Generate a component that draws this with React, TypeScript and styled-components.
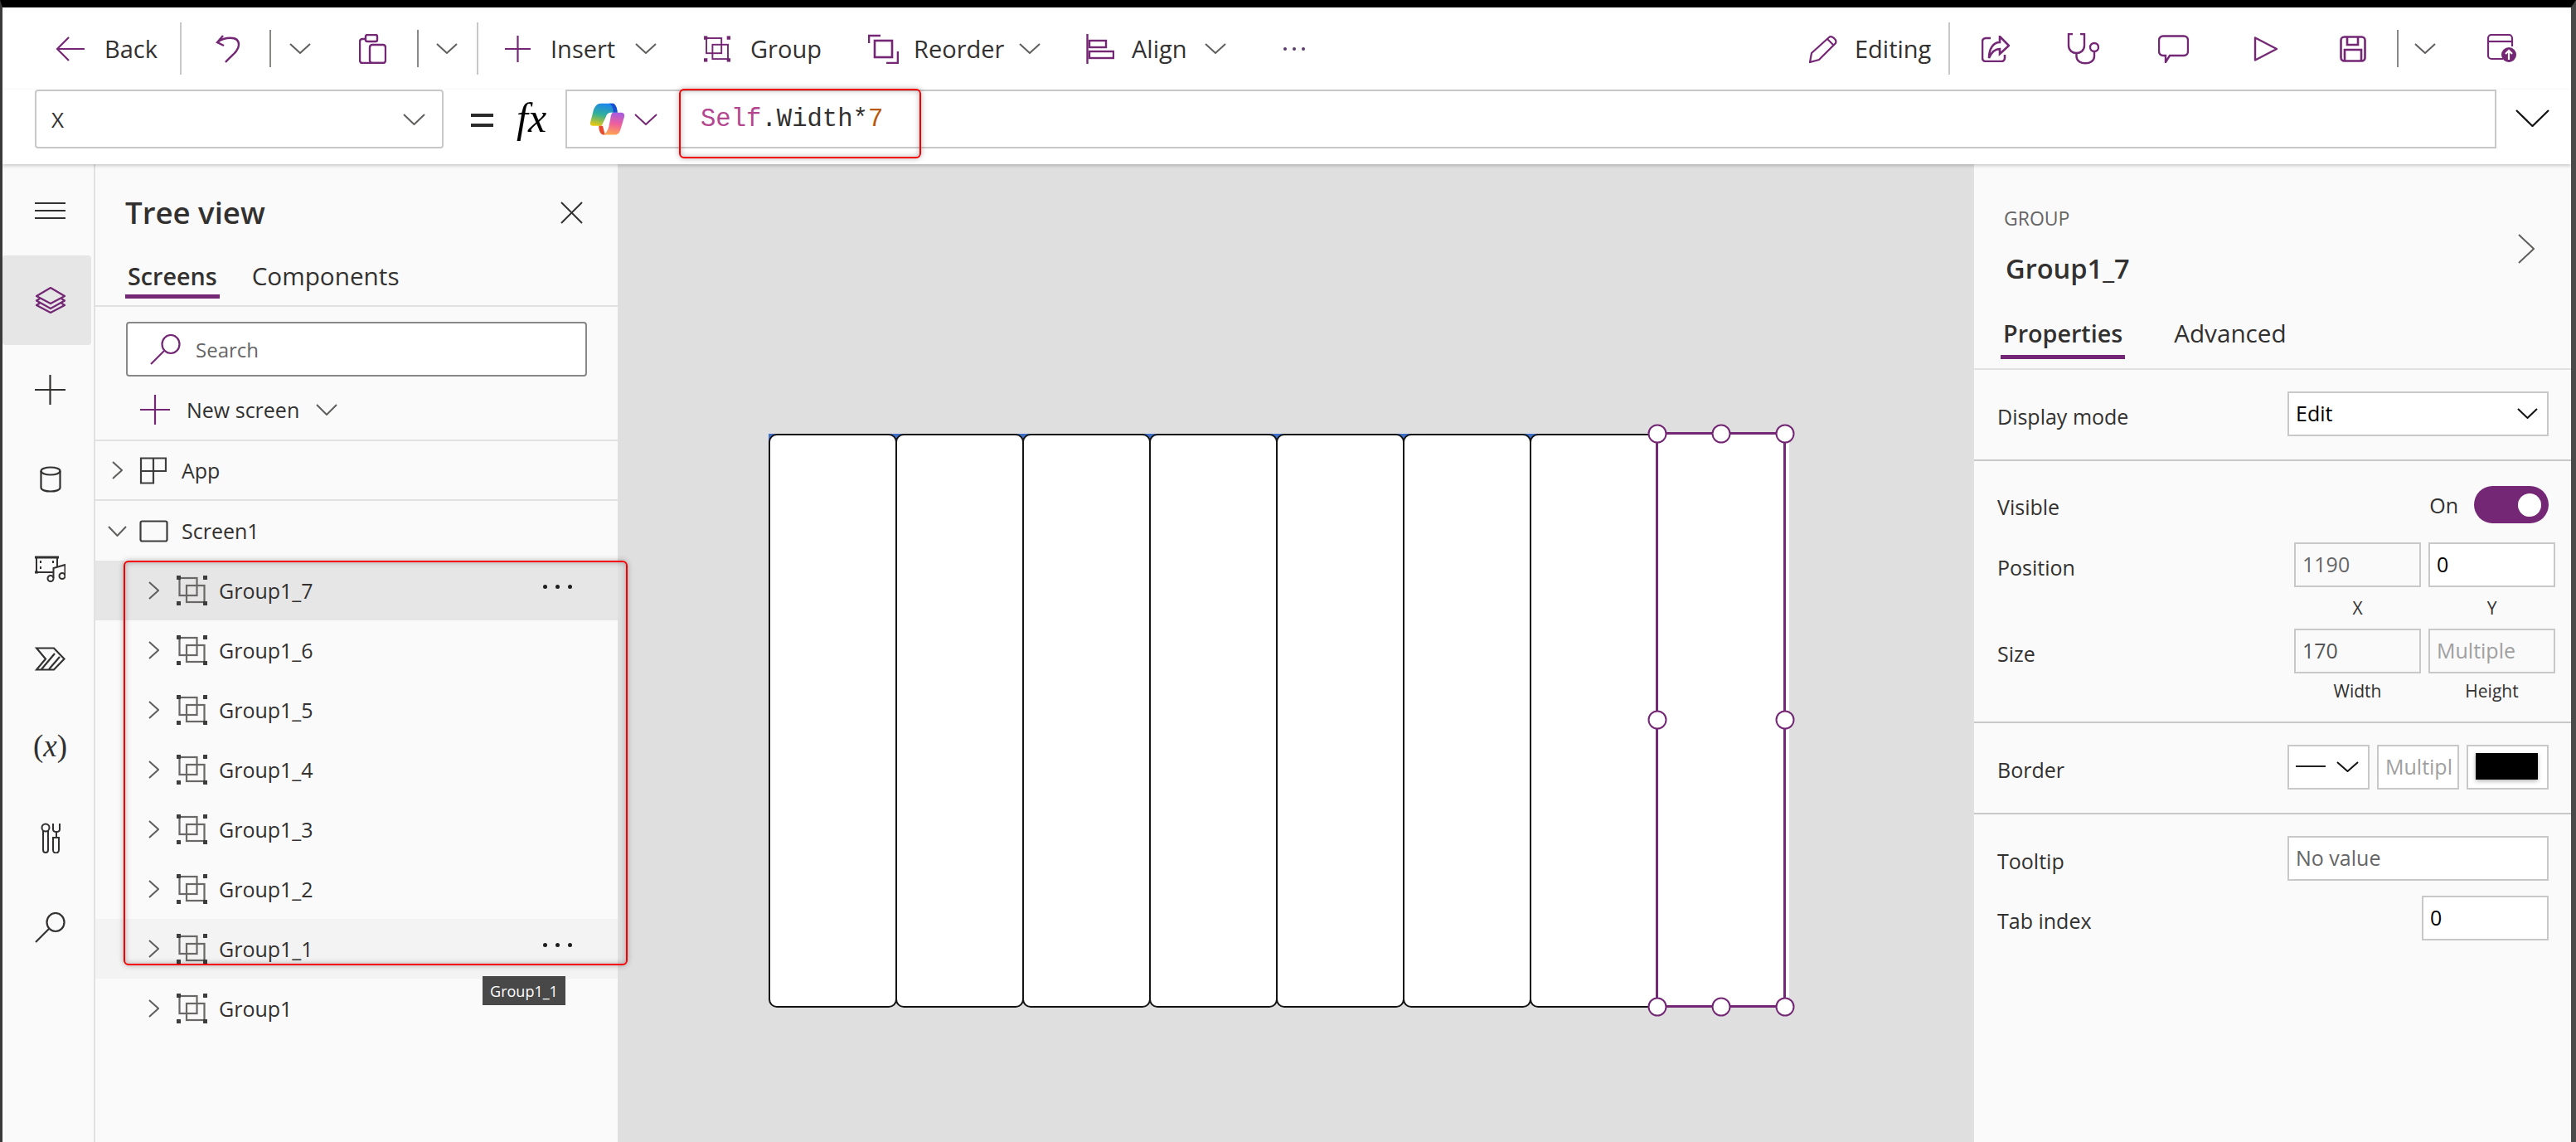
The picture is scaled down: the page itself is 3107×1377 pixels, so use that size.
import React from "react"
import styled, { createGlobalStyle } from "styled-components"

const PURPLE = "#742774"
const INK = "#323130"
const LINE = "#c8c8c8"

const GlobalStyle = createGlobalStyle`
  html, body { margin: 0; padding: 0; background: #fff; }
  body { font-family: "Open Sans", "Noto Sans", sans-serif; color: ${INK}; }
  * { box-sizing: border-box; }
`

const Frame = styled.div`
  width: 3107px;
  height: 1377px;
  overflow: hidden;
  display: flex;
  flex-direction: column;
  position: relative;
  border-top: 9px solid #000;
  border-left: 3px solid #3a3a3a;
  border-right: 6px solid #4a4a4a;
`

/* ---- svg helper ---- */
const Svg = styled.svg<{ $c?: string; $sw?: number }>`
  display: block;
  flex-shrink: 0;
  fill: none;
  stroke: ${p => p.$c || PURPLE};
  stroke-width: ${p => p.$sw || 2.4};
`

type IconProps = { w: number; h: number; c?: string; sw?: number; children?: React.ReactNode }
const Ico = ({ w, h, c, sw, children }: IconProps) => (
  <Svg width={w} height={h} viewBox={`0 0 ${w} ${h}`} $c={c} $sw={sw}>{children}</Svg>
)

const Down = ({ w = 26, h = 13, c = "#605e5c", sw = 2 }: Partial<IconProps>) => (
  <Ico w={w} h={h} c={c} sw={sw}><path d={`M1 1L${w / 2} ${h - 1}L${w - 1} 1`} /></Ico>
)
const Right = ({ w = 13, h = 22, c = "#605e5c", sw = 2 }: Partial<IconProps>) => (
  <Ico w={w} h={h} c={c} sw={sw}><path d={`M1 1L${w - 1} ${h / 2}L1 ${h - 1}`} /></Ico>
)

const GroupGlyph = ({ c = "#6a6866", dot = "#3d3d3d", w = 37, h = 36 }: { c?: string; dot?: string; w?: number; h?: number }) => (
  <Svg width={w} height={h} viewBox="0 0 37 36" $c={c} $sw={2.2}>
    <rect x="3.5" y="3" width="21" height="21" />
    <rect x="12" y="12" width="21.5" height="20" />
    <g fill={dot} stroke="none">
      <rect x="0" y="0" width="5" height="5" />
      <rect x="32" y="0" width="5" height="5" />
      <rect x="0" y="31" width="5" height="5" />
      <rect x="32" y="31" width="5" height="5" />
    </g>
  </Svg>
)

const SearchGlyph = ({ c = PURPLE }: { c?: string }) => (
  <Ico w={37} h={37} c={c} sw={2.2}>
    <ellipse cx="25" cy="12" rx="10.5" ry="11" />
    <path d="M17 20L1 36" />
  </Ico>
)

const PlusGlyph = ({ w = 36, h = 36, c = PURPLE }: { w?: number; h?: number; c?: string }) => (
  <Ico w={w} h={h} c={c} sw={2.2}>
    <path d={`M${w / 2} 0V${h}M0 ${h / 2}H${w}`} />
  </Ico>
)

const Copilot = () => (
  <svg width="41" height="39" viewBox="67 50 123 116" style={{ flexShrink: 0 }}>
    <defs>
      <linearGradient id="cpA" x1="0.55" y1="0" x2="0.3" y2="1">
        <stop offset="0" stopColor="#1b86ee" />
        <stop offset="0.5" stopColor="#2fb09a" />
        <stop offset="1" stopColor="#e6c80f" />
      </linearGradient>
      <linearGradient id="cpB" x1="0.6" y1="0" x2="0.45" y2="1">
        <stop offset="0" stopColor="#a85ce0" />
        <stop offset="0.5" stopColor="#ee5f9c" />
        <stop offset="1" stopColor="#ffa552" />
      </linearGradient>
    </defs>
    <path d="M105 52H148C158 52 165 70 165 85H142C130 85 126 92 122 104L112 128C110 132 106 133 100 133H78C70 133 65 128 67 120L76 86C80 66 90 52 105 52Z" fill="url(#cpA)" />
    <path d="M135 52H148C158 52 165 70 165 85H150C150 70 146 56 135 52Z" fill="#1a4fd0" />
    <path d="M98 133H112L120 165H114C104 165 97 150 98 133Z" fill="#e9492c" />
    <path d="M150 85H180C188 85 192 92 190 100L178 140C174 156 168 165 156 165H114C124 160 130 150 134 136L140 105C142 94 144 85 150 85Z" fill="url(#cpB)" />
    <path d="M122 104L138 98L128 128L108 132Z" fill="#fff" />
  </svg>
)

/* ---- toolbar ---- */
const Toolbar = styled.div`
  height: 99px;
  flex-shrink: 0;
  background: #fff;
  display: flex;
  align-items: center;
`
const Tool = styled.div<{ $w: number; $pad?: number; $gap?: number }>`
  width: ${p => p.$w}px;
  height: 100%;
  flex-shrink: 0;
  display: flex;
  align-items: center;
  padding-left: ${p => p.$pad || 0}px;
  gap: ${p => p.$gap || 0}px;
  font-size: 29px;
  color: ${INK};
  white-space: nowrap;
`
const Lead = styled.div`
  width: 64px;
  flex-shrink: 0;
`
const Spring = styled.div`
  flex: 1;
`
const Sep = styled.div<{ $dark?: boolean }>`
  width: 2px;
  flex-shrink: 0;
  height: ${p => (p.$dark ? 45 : 63)}px;
  background: ${p => (p.$dark ? "#8a8886" : LINE)};
`
const Dots = styled.div<{ $gap: number; $size: number; $c: string }>`
  display: flex;
  gap: ${p => p.$gap}px;
  & > i {
    display: block;
    width: ${p => p.$size}px;
    height: ${p => p.$size}px;
    border-radius: 50%;
    background: ${p => p.$c};
  }
`

/* ---- formula bar ---- */
const FormulaBar = styled.div`
  height: 90px;
  flex-shrink: 0;
  background: #fff;
  display: flex;
  align-items: flex-start;
  position: relative;
  z-index: 2;
  box-shadow: 0 2px 4px rgba(0, 0, 0, 0.2);
`
const PropPicker = styled.div`
  width: 493px;
  height: 71px;
  margin-left: 39px;
  border: 2px solid ${LINE};
  border-radius: 4px;
  display: flex;
  align-items: center;
  justify-content: space-between;
  padding: 0 20px 0 18px;
  font-size: 26px;
`
const Eq = styled.div`
  width: 53px;
  margin-left: 33px;
  height: 71px;
  display: flex;
  align-items: center;
  & > i {
    display: block;
    width: 27px;
    height: 16px;
    border-top: 4px solid #2a2a2a;
    border-bottom: 4px solid #2a2a2a;
    margin-top: 2px;
  }
`
const Fx = styled.div`
  width: 61px;
  height: 71px;
  padding-left: 2px;
  font: italic 50px/68px "Liberation Serif", serif;
  color: #000;
`
const Expression = styled.div`
  width: 2329px;
  flex: none;
  height: 71px;
  border: 2px solid ${LINE};
  display: flex;
  align-items: center;
  gap: 12px;
  padding-left: 28px;
`
const Code = styled.div`
  margin-left: 40px;
  font: 30.6px "Liberation Mono", monospace;
  color: #323130;
  white-space: pre;
`
const Tok = styled.span<{ $c: string }>`
  color: ${p => p.$c};
`
const BigChevron = styled.div`
  margin-left: 23px;
  padding-top: 24px;
`
const RedMark = styled.div`
  position: absolute;
  border: 2px solid #f40000;
  border-radius: 6px;
  box-shadow: 0 0 7px rgba(0, 0, 0, 0.28), inset 0 0 7px rgba(0, 0, 0, 0.28);
  pointer-events: none;
`
const FormulaMark = styled(RedMark)`
  left: 816px;
  top: -1px;
  width: 292px;
  height: 84px;
`

/* ---- main ---- */
const Main = styled.div`
  flex: 1;
  display: flex;
  position: relative;
  min-height: 0;
`
const Rail = styled.div`
  width: 112px;
  flex-shrink: 0;
  background: #fafafa;
  border-right: 2px solid #e1e1e1;
  padding-top: 2px;
`
const RailBtn = styled.div<{ $on?: boolean }>`
  width: 107px;
  height: 108px;
  display: flex;
  align-items: center;
  justify-content: center;
  padding-left: 8px;
  border-radius: 4px;
  background: ${p => (p.$on ? "#e6e6e6" : "transparent")};
`
const VarGlyph = styled(RailBtn)`
  padding-bottom: 5px;
  font: 37px "Liberation Serif", serif;
  color: ${INK};
`

const Tree = styled.div`
  width: 630px;
  flex-shrink: 0;
  background: #fafafa;
`
const TreeHead = styled.div`
  height: 116px;
  display: flex;
  align-items: center;
  justify-content: space-between;
  padding: 0 42px 0 36px;
  font-size: 36.6px;
  font-weight: 600;
  color: ${INK};
`
const TabRow = styled.div<{ $h: number; $pl: number; $gap: number }>`
  height: ${p => p.$h}px;
  display: flex;
  align-items: flex-start;
  gap: ${p => p.$gap}px;
  padding-left: ${p => p.$pl}px;
  border-bottom: 2px solid #e1e1e1;
`
const Tab = styled.div<{ $on?: boolean; $h: number; $pt?: number; $pb?: number }>`
  height: ${p => p.$h}px;
  display: flex;
  align-items: center;
  padding: ${p => p.$pt || 0}px 3px ${p => p.$pb || 0}px;
  font-size: ${p => (p.$on ? 28.7 : 29.7)}px;
  font-weight: ${p => (p.$on ? 600 : 400)};
  color: ${INK};
  border-bottom: 5px solid ${p => (p.$on ? PURPLE : "transparent")};
`
const SearchBox = styled.div`
  width: 556px;
  height: 66px;
  margin: 18px 0 0 37px;
  border: 2px solid #8a8886;
  border-radius: 4px;
  background: #fff;
  display: flex;
  align-items: center;
  gap: 18px;
  padding-left: 27px;
  font-size: 24px;
  color: #666;
`
const NewScreen = styled.div`
  height: 78px;
  display: flex;
  align-items: center;
  padding: 4px 0 0 54px;
  gap: 20px;
  border-bottom: 2px solid #e1e1e1;
  font-size: 25px;
  color: ${INK};
`
const TreeRow = styled.div<{ $indent: number; $bg?: string; $h?: number; $rule?: boolean }>`
  height: ${p => p.$h || 72}px;
  display: flex;
  align-items: center;
  padding-left: ${p => p.$indent}px;
  padding-right: 55px;
  background: ${p => p.$bg || "transparent"};
  border-bottom: ${p => (p.$rule ? "2px solid #e1e1e1" : "none")};
  font-size: 25px;
  color: ${INK};
`
const Caret = styled.div<{ $w?: number }>`
  width: ${p => p.$w || 43}px;
  flex-shrink: 0;
  display: flex;
  justify-content: center;
  padding-right: 13px;
`
const RowIcon = styled.div`
  width: 51px;
  flex-shrink: 0;
`
const RowDots = styled.div`
  margin-left: auto;
  padding-bottom: 10px;
`
const Tip = styled.div`
  position: absolute;
  left: 579px;
  top: 979px;
  width: 100px;
  height: 35px;
  background: #484848;
  color: #fff;
  font-size: 18px;
  display: flex;
  align-items: center;
  justify-content: center;
  z-index: 3;
`
const TreeMark = styled(RedMark)`
  left: 146px;
  top: 478px;
  width: 608px;
  height: 488px;
  z-index: 4;
`

/* ---- canvas ---- */
const Canvas = styled.div`
  width: 1634px;
  flex-shrink: 0;
  background: #dfdfdf;
  padding: 325px 0 0 182px;
`
const Board = styled.div`
  display: flex;
  height: 692px;
  width: fit-content;
  background: linear-gradient(#3f6fc6 0 9px, transparent 9px);
`
const Cell = styled.div`
  width: 155px;
  height: 100%;
  margin-right: -2px;
  background: #fff;
  border: 2px solid #141414;
  border-radius: 10px;
`
const SelectedCell = styled.div`
  width: 157px;
  height: 694px;
  margin: -2px 0 0 -1px;
  position: relative;
  background: #fff;
  border: 3px solid ${PURPLE};
  box-shadow: 4px 0 0 #fff;
`
const Handle = styled.div<{ $x: number; $y: number }>`
  position: absolute;
  left: calc(-1.5px + (100% + 3px) * ${p => p.$x / 100});
  top: calc(-1.5px + (100% + 3px) * ${p => p.$y / 100});
  width: 23px;
  height: 23px;
  transform: translate(-50%, -50%);
  border: 2px solid ${PURPLE};
  border-radius: 50%;
  background: #fff;
`

/* ---- properties panel ---- */
const Panel = styled.div`
  width: 722px;
  flex-shrink: 0;
  background: #fafafa;
  border-left: 2px solid #e1e1e1;
`
const PanelHead = styled.div`
  height: 168px;
  display: flex;
  justify-content: space-between;
  padding: 50px 44px 0 36px;
`
const KindLabel = styled.div`
  font-size: 23px;
  line-height: 30px;
  color: #666;
`
const PanelTitle = styled.div`
  margin: 24px 0 0 2px;
  font-size: 32.6px;
  line-height: 44px;
  font-weight: 600;
  color: ${INK};
`
const HeadCaret = styled.div`
  margin-top: 34px;
`
const Section = styled.div<{ $h: number; $pt?: number }>`
  height: ${p => p.$h}px;
  padding: ${p => p.$pt || 0}px 27px 0 28px;
  border-bottom: 2px solid ${LINE};
`
const LastSection = styled.div`
  padding: 26px 27px 0 28px;
`
const Row = styled.div<{ $mt?: number }>`
  display: flex;
  justify-content: space-between;
  align-items: flex-start;
  margin-top: ${p => p.$mt || 0}px;
`
const Label = styled.div<{ $h?: number }>`
  height: ${p => p.$h || 54}px;
  display: flex;
  align-items: center;
  padding-top: 5px;
  font-size: 25px;
  color: ${INK};
`
const Field = styled.div<{ $w: number; $bg?: string; $c?: string; $h?: number }>`
  width: ${p => p.$w}px;
  height: ${p => p.$h || 54}px;
  flex-shrink: 0;
  border: 2px solid ${LINE};
  background: ${p => p.$bg || "#fff"};
  color: ${p => p.$c || "#000"};
  display: flex;
  align-items: center;
  justify-content: space-between;
  padding: 0 11px 2px 8px;
  font-size: 25px;
  overflow: hidden;
  white-space: nowrap;
`
const Pair = styled.div`
  display: grid;
  grid-template-columns: 153px 153px;
  column-gap: 9px;
  margin-right: -8px;
`
const SubLabel = styled.div<{ $h: number }>`
  height: ${p => p.$h}px;
  display: flex;
  align-items: center;
  justify-content: center;
  font-size: 21px;
  color: ${INK};
`
const OnOff = styled.div`
  display: flex;
  align-items: center;
  gap: 19px;
  font-size: 25px;
`
const Toggle = styled.div`
  width: 90px;
  height: 45px;
  border-radius: 23px;
  background: ${PURPLE};
  display: flex;
  align-items: center;
  justify-content: flex-end;
  padding-right: 9px;
  & > i {
    display: block;
    width: 28px;
    height: 28px;
    border-radius: 50%;
    background: #fff;
  }
`
const Trio = styled.div`
  display: flex;
  gap: 9px;
`
const Dash = styled.div`
  width: 36px;
  height: 2px;
  background: #222;
`
const Clip = styled.div`
  width: 81px;
  flex-shrink: 0;
  overflow: hidden;
`
const Swatch = styled.div`
  width: 77px;
  height: 32px;
  margin-left: 1px;
  background: #000;
  box-shadow: 0 2px 5px rgba(0, 0, 0, 0.3);
`

const groups = ["Group1_7", "Group1_6", "Group1_5", "Group1_4", "Group1_3", "Group1_2", "Group1_1", "Group1"]
const rowBg: Record<string, string> = { Group1_7: "#e6e6e6", Group1_1: "#f3f3f3" }
const handles = [[0, 0], [50, 0], [100, 0], [0, 50], [100, 50], [0, 100], [50, 100], [100, 100]]

const threeDots = (c: string, gap: number, size: number) => (
  <Dots $gap={gap} $size={size} $c={c}><i /><i /><i /></Dots>
)

export default function App() {
  return (
    <Frame>
      <GlobalStyle />
      <Toolbar>
        <Lead />
        <Tool $w={150} $gap={24}>
          <Ico w={35} h={30} sw={2.2}><path d="M35 15H2M16 1L2 15L16 29" /></Ico>
          Back
        </Tool>
        <Sep />
        <Tool $w={106} $pad={41}>
          <Ico w={30} h={34} sw={2.4}><path d="M9 1L2 9L10 13M2 9C10 3 28 0 28 12C28 20 18 26 12 33" /></Ico>
        </Tool>
        <Sep $dark />
        <Tool $w={106} $pad={22}><Down /></Tool>
        <Tool $w={70}>
          <Ico w={33} h={36} sw={2.4}>
            <path d="M8 6H4a3 3 0 0 0-3 3v23a3 3 0 0 0 3 3h25" />
            <rect x="13" y="13" width="19" height="22" rx="3" />
            <rect x="8" y="1" width="14" height="8" rx="2" />
          </Ico>
        </Tool>
        <Sep $dark />
        <Tool $w={70} $pad={21}><Down /></Tool>
        <Sep />
        <Tool $w={272} $pad={32} $gap={24}>
          <PlusGlyph w={31} h={32} />
          Insert
          <Down />
        </Tool>
        <Tool $w={198} $gap={24}>
          <GroupGlyph c={PURPLE} dot={PURPLE} w={32} h={32} />
          Group
        </Tool>
        <Tool $w={263} $gap={18}>
          <Ico w={37} h={36} sw={2.6}>
            <path d="M1 11V2H15" />
            <rect x="8" y="8" width="21" height="20" />
            <path d="M36 21V35H22" />
          </Ico>
          Reorder
          <Down />
        </Tool>
        <Tool $w={238} $gap={21}>
          <Ico w={34} h={36} sw={2.4}>
            <path d="M1.5 0V36" />
            <rect x="4" y="8" width="20" height="8" />
            <rect x="4" y="21" width="29" height="8" />
          </Ico>
          Align
          <Down />
        </Tool>
        <Tool $w={60}>{threeDots("#5a3a6a", 7, 4)}</Tool>
        <Spring />
        <Tool $w={168} $gap={20}>
          <Ico w={35} h={34} sw={2.2}>
            <path d="M1 33L3 22L24 3C27 0 34 6 32 10L12 30Z" />
            <path d="M22 5L30 13" />
          </Ico>
          Editing
        </Tool>
        <Sep />
        <Tool $w={141} $pad={38}>
          <Ico w={34} h={32} sw={2.6}>
            <path d="M11 3H5a4 4 0 0 0-4 4v20a4 4 0 0 0 4 4h19a4 4 0 0 0 4-4v-4" />
            <path d="M22 1L33 12L22 22V16C16 16 12 20 9 27C9 16 14 8 22 8Z" />
          </Ico>
        </Tool>
        <Tool $w={110}>
          <Ico w={39} h={38} sw={2.4}>
            <path d="M7 1H2V15C2 27 21 27 21 15V1H16" />
            <path d="M11.5 24V28C11.5 39 33 39 33 28V22" />
            <circle cx="33" cy="17" r="5" />
          </Ico>
        </Tool>
        <Tool $w={115}>
          <Ico w={37} h={34} sw={2.4}>
            <path d="M6 1.5H31a5 5 0 0 1 5 5V20a5 5 0 0 1-5 5H14L9 33V25H6a5 5 0 0 1-5-5V6.5a5 5 0 0 1 5-5Z" />
          </Ico>
        </Tool>
        <Tool $w={104}>
          <Ico w={30} h={32} sw={2.4}><path d="M2 2.5L28 16L2 29.5Z" strokeLinejoin="round" /></Ico>
        </Tool>
        <Tool $w={69}>
          <Ico w={32} h={32} sw={2.6}>
            <rect x="1.5" y="1.5" width="29" height="29" rx="4" />
            <path d="M9 2V11H22V2M6 30V17H26V30" />
          </Ico>
        </Tool>
        <Sep $dark />
        <Tool $w={106} $pad={19}><Down /></Tool>
        <Tool $w={102}>
          <Svg width={36} height={35} viewBox="0 0 36 35" $c={PURPLE} $sw={2.2}>
            <path d="M20 30H6a4 4 0 0 1-4-4V5a4 4 0 0 1 4-4H27a4 4 0 0 1 4 4v10" />
            <path d="M2 9H31" />
            <circle cx="27" cy="25" r="9" fill={PURPLE} stroke="none" />
            <path d="M27 31V20M23 24L27 20L31 24" stroke="#fff" />
          </Svg>
        </Tool>
      </Toolbar>

      <FormulaBar>
        <PropPicker>X<Down w={27} h={14} /></PropPicker>
        <Eq><i /></Eq>
        <Fx>fx</Fx>
        <Expression>
          <Copilot />
          <Down w={28} h={14} c={PURPLE} />
          <Code>
            <Tok $c="#b4468f">Self</Tok>.Width*<Tok $c="#b8590d">7</Tok>
          </Code>
        </Expression>
        <BigChevron><Down w={41} h={21} c="#111" sw={2.2} /></BigChevron>
        <FormulaMark />
      </FormulaBar>

      <Main>
        <Rail>
          <RailBtn>
            <Ico w={37} h={22} c={INK} sw={2}><path d="M0 2H37M0 11H37M0 20H37" /></Ico>
          </RailBtn>
          <RailBtn $on>
            <Ico w={36} h={32} sw={2.2}>
              <path d="M18 1L35 11L18 20L1 11Z" />
              <path d="M5 14L1 16.5L18 26L35 16.5L31 14" />
              <path d="M5 19.5L1 22L18 31L35 22L31 19.5" />
            </Ico>
          </RailBtn>
          <RailBtn><PlusGlyph w={37} h={36} c={INK} /></RailBtn>
          <RailBtn>
            <Ico w={26} h={32} c={INK} sw={2.2}>
              <path d="M1.5 6V26C1.5 32 24.5 32 24.5 26V6" />
              <ellipse cx="13" cy="6" rx="11.5" ry="4.5" />
            </Ico>
          </RailBtn>
          <RailBtn>
            <Ico w={37} h={32} c={INK} sw={2}>
              <path d="M22 20H2V2H27V13" />
              <path d="M0 2H29M0 20H4" strokeWidth="3" />
              <path d="M7 6V9M7 13V16M22 6V9" />
              <circle cx="19" cy="27.5" r="3.5" />
              <circle cx="33" cy="24.5" r="3.5" />
              <path d="M22.5 27V15L36.5 11V24" />
            </Ico>
          </RailBtn>
          <RailBtn>
            <Ico w={37} h={29} c={INK} sw={2.2}>
              <path d="M2 1.5H23L35.5 14.5L23 27.5H2L13 14.5Z" />
              <path d="M8 27L24 8M17 27L30 12" />
            </Ico>
          </RailBtn>
          <VarGlyph>(<i>x</i>)</VarGlyph>
          <RailBtn>
            <Ico w={24} h={37} c={INK} sw={2}>
              <circle cx="6" cy="6" r="4.5" />
              <path d="M3 10V33a3 3 0 0 0 6 0V10" />
              <path d="M15 1V8C15 12 23 12 23 8V1" />
              <path d="M19 11V18M14 18H23M15 18V33a3.5 3.5 0 0 0 7 0V18" />
            </Ico>
          </RailBtn>
          <RailBtn><SearchGlyph c={INK} /></RailBtn>
        </Rail>

        <Tree>
          <TreeHead>
            Tree view
            <Ico w={27} h={27} c={INK} sw={2}><path d="M1 1L26 26M26 1L1 26" /></Ico>
          </TreeHead>
          <TabRow $h={56} $pl={36} $gap={36}>
            <Tab $on $h={46} $pb={4}>Screens</Tab>
            <Tab $h={46} $pb={4}>Components</Tab>
          </TabRow>
          <SearchBox>
            <SearchGlyph />
            Search
          </SearchBox>
          <NewScreen>
            <PlusGlyph />
            New screen
            <Down w={26} h={14} />
          </NewScreen>
          <TreeRow $indent={13} $rule>
            <Caret $w={40}><Right /></Caret>
            <RowIcon>
              <Ico w={33} h={33} c="#3d3d3d" sw={2.2}>
                <path d="M2 1.5H32V17H17V31.5H2ZM17 1.5V17M2 17H17" />
              </Ico>
            </RowIcon>
            App
          </TreeRow>
          <TreeRow $indent={13}>
            <Caret $w={40}><Down w={23} h={13} /></Caret>
            <RowIcon>
              <Ico w={35} h={27} c="#3d3d3d" sw={2.2}><rect x="1.5" y="1.5" width="32" height="24" rx="2" /></Ico>
            </RowIcon>
            Screen1
          </TreeRow>
          {groups.map(name => (
            <TreeRow key={name} $indent={55} $bg={rowBg[name]}>
              <Caret><Right /></Caret>
              <RowIcon><GroupGlyph /></RowIcon>
              {name}
              {rowBg[name] && <RowDots>{threeDots("#1f1f1f", 10, 5)}</RowDots>}
            </TreeRow>
          ))}
        </Tree>

        <Canvas>
          <Board>
            {[1, 2, 3, 4, 5, 6, 7].map(n => <Cell key={n} />)}
            <SelectedCell>
              {handles.map(([x, y]) => <Handle key={`${x}-${y}`} $x={x} $y={y} />)}
            </SelectedCell>
          </Board>
        </Canvas>

        <Panel>
          <PanelHead>
            <div>
              <KindLabel>GROUP</KindLabel>
              <PanelTitle>Group1_7</PanelTitle>
            </div>
            <HeadCaret><Right w={20} h={36} /></HeadCaret>
          </PanelHead>
          <TabRow $h={80} $pl={32} $gap={56}>
            <Tab $on $h={67} $pt={8}>Properties</Tab>
            <Tab $h={67} $pt={8}>Advanced</Tab>
          </TabRow>
          <Section $h={110} $pt={26}>
            <Row>
              <Label>Display mode</Label>
              <Field $w={315}>Edit<Down w={25} h={13} c="#111" /></Field>
            </Row>
          </Section>
          <Section $h={316} $pt={30}>
            <Row>
              <Label $h={45}>Visible</Label>
              <OnOff>On<Toggle><i /></Toggle></OnOff>
            </Row>
            <Row $mt={23}>
              <Label>Position</Label>
              <Pair>
                <Field $w={153} $bg="#fafafa" $c="#666">1190</Field>
                <Field $w={153}>0</Field>
                <SubLabel $h={50}>X</SubLabel>
                <SubLabel $h={50}>Y</SubLabel>
              </Pair>
            </Row>
            <Row>
              <Label>Size</Label>
              <Pair>
                <Field $w={153} $bg="#fafafa" $c="#555">170</Field>
                <Field $w={153} $bg="#fafafa" $c="#a0a0a0">Multiple</Field>
                <SubLabel $h={42}>Width</SubLabel>
                <SubLabel $h={42}>Height</SubLabel>
              </Pair>
            </Row>
          </Section>
          <Section $h={110} $pt={26}>
            <Row>
              <Label>Border</Label>
              <Trio>
                <Field $w={99}><Dash /><Down w={27} h={13} c="#111" /></Field>
                <Field $w={99} $c="#a0a0a0"><Clip>Multiple</Clip></Field>
                <Field $w={99}><Swatch /></Field>
              </Trio>
            </Row>
          </Section>
          <LastSection>
            <Row>
              <Label>Tooltip</Label>
              <Field $w={315} $c="#666">No value</Field>
            </Row>
            <Row $mt={18}>
              <Label>Tab index</Label>
              <Field $w={153}>0</Field>
            </Row>
          </LastSection>
        </Panel>

        <TreeMark />
        <Tip>Group1_1</Tip>
      </Main>
    </Frame>
  )
}
